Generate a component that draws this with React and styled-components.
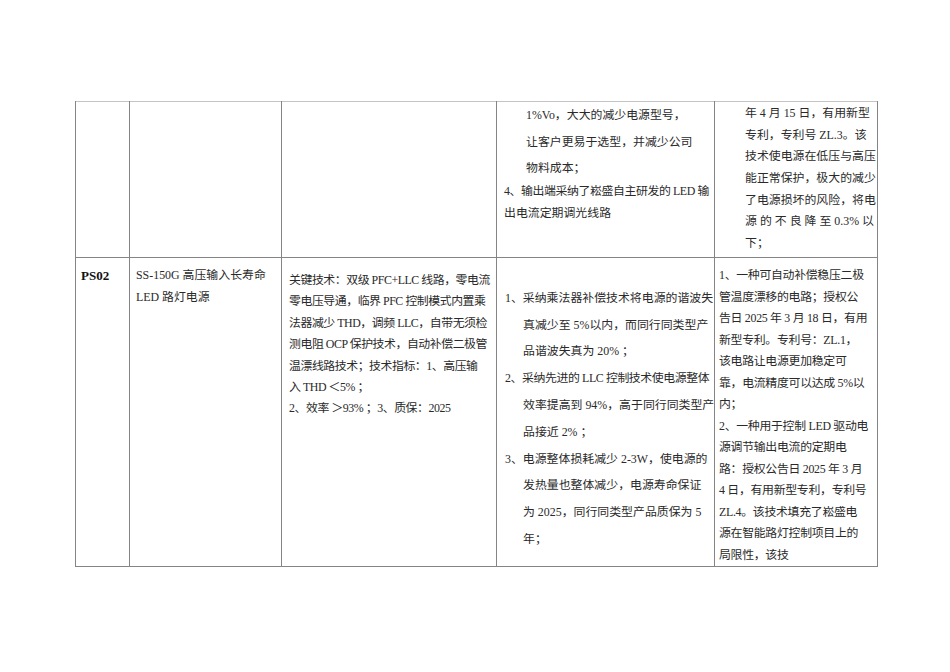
import React from "react"
import styled, { createGlobalStyle } from "styled-components"

const GlobalStyle = createGlobalStyle`
  html, body {
    margin: 0;
    padding: 0;
    background: #ffffff;
  }
  body {
    width: 950px;
    height: 672px;
    overflow: hidden;
    font-family: "Liberation Serif", "Noto Sans CJK SC", serif;
    color: #2a2a2a;
  }
`

const Page = styled.div`
  padding: 101px 0 0 75px;
`

const Table = styled.table`
  border-collapse: collapse;
  table-layout: fixed;
  width: 802px;
  border-top: 1.5px solid #c4c4c4;
`

const Row = styled.tr`
  height: ${(p) => p.$h}px;
`

const Cell = styled.td`
  box-sizing: border-box;
  width: ${(p) => p.$w}px;
  vertical-align: top;
  padding: ${(p) => p.$pad || "0"};
  border-left: 1px solid #858585;
  border-right: 1px solid #858585;
  border-bottom: 1px solid #858585;
  font-size: 11.9px;
  letter-spacing: ${(p) => p.$ls || 0}px;
  overflow: visible;
`

const Code = styled.div`
  font-family: "Liberation Serif", serif;
  font-weight: bold;
  font-size: 13px;
  line-height: 21.5px;
  color: #111;
`

const Line = styled.div`
  white-space: nowrap;
  line-height: ${(p) => p.$lh || 21.5}px;
  height: ${(p) => p.$lh || 21.5}px;
  padding-left: ${(p) => p.$indent || 0}px;
  ${(p) => p.$tight && `letter-spacing: -0.4px;`}
  ${(p) =>
    p.$justify &&
    `
    white-space: normal;
    text-align: justify;
    text-align-last: justify;
  `}
`

const row1Col4 = [
  { t: "1%Vo，大大的减少电源型号，", indent: 29, lh: 27 },
  { t: "让客户更易于选型，并减少公司", indent: 29, lh: 27 },
  { t: "物料成本；", indent: 29, lh: 24 },
  { t: "4、输出端采纳了崧盛自主研发的 LED 输", indent: 7, lh: 22, tight: true },
  { t: "出电流定期调光线路", indent: 7, lh: 22 },
]

const row1Col5 = [
  "年 4 月 15 日，有用新型",
  "专利，专利号 ZL.3。该",
  "技术使电源在低压与高压",
  "能正常保护，极大的减少",
  "了电源损坏的风险，将电",
  "源 的 不 良 降 至 0.3% 以",
  "下；",
]

const row2Col3 = [
  "关键技术：双级 PFC+LLC 线路，零电流",
  "零电压导通，临界 PFC 控制模式内置乘",
  "法器减少 THD，调频 LLC，自带无须检",
  "测电阻 OCP 保护技术，自动补偿二极管",
  "温漂线路技术；技术指标：1、高压输",
  "入 THD ＜5% ；",
  "2、效率 ＞93% ；3、质保：2025",
]

const row2Col4 = [
  { t: "\u00a0", indent: 0 },
  { t: "1、采纳乘法器补偿技术将电源的谐波失", indent: 0 },
  { t: "真减少至 5%以内，而同行同类型产", indent: 18 },
  { t: "品谐波失真为 20% ；", indent: 18 },
  { t: "2、采纳先进的 LLC 控制技术使电源整体", indent: 0, tight: true },
  { t: "效率提高到 94%，高于同行同类型产", indent: 18 },
  { t: "品接近 2% ；", indent: 18 },
  { t: "3、电源整体损耗减少 2-3W，使电源的", indent: 0 },
  { t: "发热量也整体减少，电源寿命保证", indent: 18 },
  { t: "为 2025，同行同类型产品质保为 5", indent: 18 },
  { t: "年；", indent: 18 },
]

const row2Col5 = [
  "1、一种可自动补偿稳压二极",
  "管温度漂移的电路；授权公",
  "告日 2025 年 3 月 18 日，有用",
  "新型专利。专利号：ZL.1，",
  "该电路让电源更加稳定可",
  "靠，电流精度可以达成 5%以",
  "内；",
  "2、一种用于控制 LED 驱动电",
  "源调节输出电流的定期电",
  "路：授权公告日 2025 年 3 月",
  "4 日，有用新型专利，专利号",
  "ZL.4。该技术填充了崧盛电",
  "源在智能路灯控制项目上的",
  "局限性，该技",
]

export default function App() {
  return (
    <Page>
      <GlobalStyle />
      <Table>
        <tbody>
          <Row $h={156}>
            <Cell $w={54} />
            <Cell $w={152} />
            <Cell $w={215} />
            <Cell $w={218} $pad="0 2px 0 0">
              {row1Col4.map((l, i) => (
                <Line key={i} $indent={l.indent} $lh={l.lh} $tight={l.tight}>
                  {l.t}
                </Line>
              ))}
            </Cell>
            <Cell $w={163} $pad="1px 3px 0 30px">
              {row1Col5.map((t, i) => (
                <Line key={i} $lh={21.7} $justify={i === 5}>
                  {t}
                </Line>
              ))}
            </Cell>
          </Row>
          <Row $h={308}>
            <Cell $w={54} $pad="7px 0 0 5px">
              <Code>PS02</Code>
            </Cell>
            <Cell $w={152} $pad="7px 0 0 6px">
              <Line>SS-150G 高压输入长寿命</Line>
              <Line>LED 路灯电源</Line>
            </Cell>
            <Cell $w={215} $pad="12px 0 0 7px" $ls={-0.45}>
              {row2Col3.map((t, i) => (
                <Line key={i} $lh={21.4}>
                  {t}
                </Line>
              ))}
            </Cell>
            <Cell $w={218} $pad="0 0 0 8px">
              {row2Col4.map((l, i) => (
                <Line key={i} $indent={l.indent} $lh={26.8} $tight={l.tight}>
                  {l.t}
                </Line>
              ))}
            </Cell>
            <Cell $w={163} $pad="7px 2px 0 4px" $ls={-0.3}>
              {row2Col5.map((t, i) => (
                <Line key={i} $lh={21.5}>
                  {t}
                </Line>
              ))}
            </Cell>
          </Row>
        </tbody>
      </Table>
    </Page>
  )
}
